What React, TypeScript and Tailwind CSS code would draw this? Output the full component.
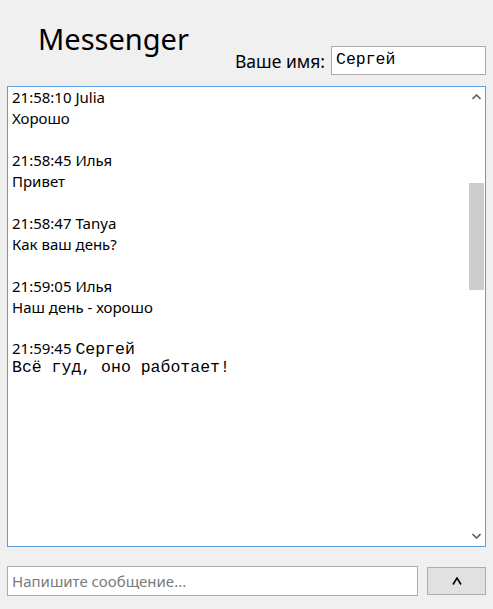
import React from 'react';

const sans = "font-['Segoe_UI','Noto_Sans','Open_Sans',sans-serif]";
const mono = "font-['Liberation_Mono','Courier_New',monospace]";

const messages = [
  { time: '21:58:10', name: 'Julia', text: 'Хорошо' },
  { time: '21:58:45', name: 'Илья', text: 'Привет' },
  { time: '21:58:47', name: 'Tanya', text: 'Как ваш день?' },
  { time: '21:59:05', name: 'Илья', text: 'Наш день - хорошо' },
];

export default function App() {
  return (
    <div className={`w-[493px] h-[609px] bg-[#f0f0f0] flex flex-col px-[7px] text-black ${sans}`}>
      {/* Header */}
      <div className="h-[86px] flex justify-between">
        <div className="pl-[31px] pt-[19px] text-[29px] leading-[40px]">Messenger</div>
        <div className="flex items-start gap-[6px] pt-[46px]">
          <span className="text-[17.5px] leading-[28px] pt-[1px]">Ваше имя:</span>
          <div className={`w-[155px] h-[29px] bg-white border border-[#ababab] flex items-center pl-[4px] text-[16.5px] ${mono}`}>
            Сергей
          </div>
        </div>
      </div>

      {/* Chat log */}
      <div className="h-[461px] bg-white border border-[#5b9fe0] flex">
        <div className="flex-1 pl-[4px] text-[15px] leading-[21px]">
          {messages.map((m, i) => (
            <div key={i} className="mb-[21px]">
              <div>{m.time} {m.name}</div>
              <div>{m.text}</div>
            </div>
          ))}
          <div className="leading-[19px]">
            {'21:59:45 '}
            <span className={`${mono} text-[16.5px]`}>Сергей</span>
          </div>
          <div className={`${mono} text-[16.5px] leading-[18px] whitespace-pre`}>Всё гуд, оно работает!</div>
        </div>
        <div className="w-[17px] flex flex-col items-center">
          <svg width="9" height="6" viewBox="0 0 9 6" className="mt-[7px]">
            <path d="M0.5 5 L4.5 1 L8.5 5" stroke="#606060" strokeWidth="1.6" fill="none" />
          </svg>
          <div className="w-[15px] h-[107px] bg-[#cdcdcd] mt-[83px]" />
          <div className="flex-1" />
          <svg width="9" height="6" viewBox="0 0 9 6" className="mb-[7px]">
            <path d="M0.5 1 L4.5 5 L8.5 1" stroke="#606060" strokeWidth="1.6" fill="none" />
          </svg>
        </div>
      </div>

      {/* Input row */}
      <div className="flex items-center justify-between mt-[19px]">
        <div className="w-[411px] h-[30px] bg-white border border-[#ababab] flex items-center pl-[4px] text-[15px] text-[#7a7a7a]">
          Напишите сообщение...
        </div>
        <button className="w-[59px] h-[28px] bg-[#e1e1e1] border border-[#adadad] flex items-center justify-center">
          <svg width="10" height="8" viewBox="0 0 10 8">
            <path d="M1 7.5 L5 1 L9 7.5" stroke="#000" strokeWidth="1.6" fill="none" />
          </svg>
        </button>
      </div>
    </div>
  );
}
